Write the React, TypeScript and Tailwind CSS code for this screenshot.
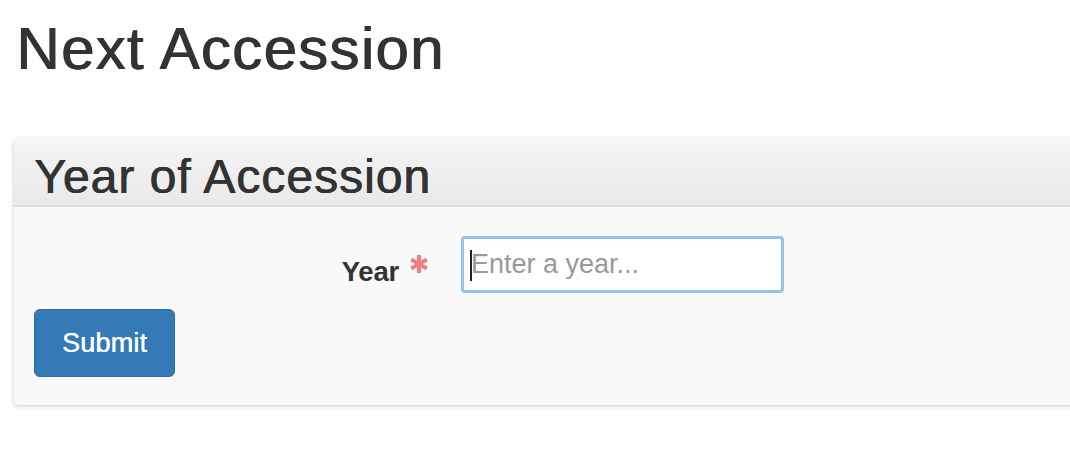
export default function App() {
  return (
    <div
      className="w-[1070px] h-[454px] overflow-hidden bg-white text-[#333]"
      style={{ fontFamily: '"Liberation Sans", Arial, sans-serif' }}
    >
      <h1 className="ml-[16px] pt-[16px] text-[60px] leading-[66px] font-normal tracking-[1.3px] [text-shadow:1px_0_0_#333,0.5px_0.4px_0_#333]">
        Next Accession
      </h1>

      <div className="mt-[56px] ml-[14px] w-[1100px] bg-[#f9f9f9] rounded-l-[3px] shadow-[0_1px_4px_rgba(0,0,0,0.22)]">
        <div className="h-[69px] pl-[20px] bg-gradient-to-b from-[#f5f5f5] to-[#e9e9e9] border-b-2 border-[#dcdcdc] rounded-tl-[3px]">
          <h2 className="pt-[12px] text-[48px] leading-[54px] font-normal tracking-[1px] [text-shadow:0.8px_0_0_#333,0.4px_0.3px_0_#333]">
            Year of Accession
          </h2>
        </div>

        <div className="pt-[29px] pb-[28px] pl-[20px]">
          <div className="flex items-center">
            <label className="w-[427px] pr-[31px] flex items-center justify-end pt-[14px]">
              <span className="text-[27.5px] font-bold leading-none tracking-[-0.2px]">Year</span>
              <svg width="22" height="22" viewBox="0 0 22 22" className="ml-[9px] -mt-[16px] blur-[0.6px]">
                <g stroke="#ec8080" strokeWidth="4.2" strokeLinecap="butt">
                  <line x1="11" y1="2" x2="11" y2="20" />
                  <line x1="3.2" y1="6.5" x2="18.8" y2="15.5" />
                  <line x1="3.2" y1="15.5" x2="18.8" y2="6.5" />
                </g>
              </svg>
            </label>
            <div className="relative">
              <input
                className="block w-[323px] h-[57px] pl-[7px] pr-[9px] bg-white border-[3px] border-[#94c3f3] rounded-[4px] text-[27px] text-[#555] placeholder:text-[#999] outline-none"
                placeholder="Enter a year..."
                style={{ fontFamily: '"Liberation Sans", Arial, sans-serif' }}
              />
              <span className="absolute left-[9px] top-[14px] w-[2px] h-[31px] bg-[#222]" />
            </div>
          </div>
          <button className="mt-[16px] w-[141px] h-[68px] bg-[#337ab7] border border-[#2e6da4] rounded-[6px] text-white text-[27px] leading-none tracking-[0.2px] [text-shadow:0.4px_0_0_#fff]">
            Submit
          </button>
        </div>
      </div>
    </div>
  );
}
